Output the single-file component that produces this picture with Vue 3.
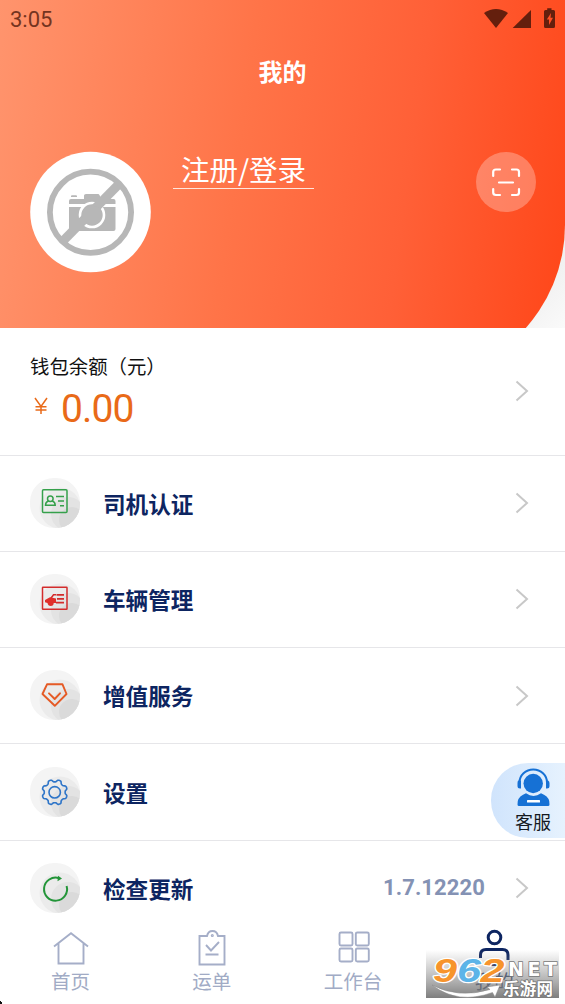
<script setup>
const rows = [
  { label: '司机认证', icon: 'license' },
  { label: '车辆管理', icon: 'vehicle' },
  { label: '增值服务', icon: 'service' },
  { label: '设置', icon: 'settings' },
  { label: '检查更新', icon: 'update', value: '1.7.12220' },
]
const gear = (() => {
  const pts = []
  for (let i = 0; i <= 96; i++) {
    const a = (i / 96) * Math.PI * 2
    const r = 11.6 + 1.2 * Math.tanh(2 * Math.cos(8 * a + Math.PI))
    pts.push(`${(24.7 + r * Math.cos(a)).toFixed(2)} ${(25.3 + r * Math.sin(a)).toFixed(2)}`)
  }
  return 'M' + pts.join('L') + 'Z'
})()
</script>

<template>
  <div class="screen">
    <header class="hero">
      <div class="hero-bg"></div>
      <div class="status">
        <span>3:05</span>
        <svg width="76" height="24" viewBox="0 0 76 24" fill="#641f0d">
          <path d="M1 13Q13 5 25 13L13 28Z" />
          <path d="M29.700 28L48 10V28Z" />
          <path fill-rule="evenodd" d="M64.200 8.300H68.500V10H70.500Q72 10 72 11.500V26.500Q72 28 70.500 28H62.500Q61 28 61 26.500V11.500Q61 10 62.500 10H64.200ZM68 13L63.800 19.500H66V25L70 17.800H67.500Z" />
        </svg>
      </div>
      <h1>我的</h1>
      <div class="profile">
        <svg class="avatar" width="122" height="122" viewBox="0 0 122 122">
          <circle cx="61.500" cy="61" r="60.300" fill="#fff" />
          <g fill="#b7b7b7">
            <path d="M42 45.200Q42 44.300 43 44.300H47Q48 44.300 48 45.200V46H42Z" />
            <path d="M40 50Q40 48 42 48H55V44.500Q55 43 57 43H69Q71 43 71.500 48H84.500Q86.500 48 86.500 50V53H40Z" />
            <path d="M40 56H86.500V78Q86.500 80 84.500 80H42Q40 80 40 78Z" />
          </g>
          <circle cx="63" cy="64" r="12" fill="#b7b7b7" stroke="#fff" stroke-width="2.600" />
          <path d="M33 91L91 32" stroke="#b7b7b7" stroke-width="9" />
          <circle cx="63" cy="64" r="9.500" fill="#b7b7b7" />
          <circle cx="61.500" cy="61.300" r="40.600" fill="none" stroke="#b7b7b7" stroke-width="5.800" />
        </svg>
        <a class="login">注册/登录</a>
        <div class="scan">
          <svg width="60" height="60" viewBox="0 0 60 60" fill="none" stroke="#fff" stroke-width="2.200" stroke-linecap="round" stroke-linejoin="round">
            <path d="M17.200 24V20Q17.200 17.500 20 17.500H24M36 17.500H40.500Q43 17.500 43 20V24M43 37V40.500Q43 43 40.500 43H36M24 43H20Q17.200 43 17.200 40.500V37M23 30.500H37" />
          </svg>
        </div>
      </div>
    </header>

    <section class="wallet">
      <div class="balance">
        <div class="caption">钱包余额（元）</div>
        <div class="amount">
          <svg class="yen" width="14" height="18" viewBox="0 0 14 18"><path d="M1 1L7 9.500L13 1M7 9V17M1.500 9.800H12.500M1.500 13H12.500" /></svg>
          <span>0.00</span>
        </div>
      </div>
      <svg class="chev" width="14" height="22" viewBox="0 0 14 22"><path d="M1.500 1.500L12 11L1.500 20.500" /></svg>
    </section>

    <main>
      <div v-for="r in rows" :key="r.icon" class="row">
        <svg class="badge" width="50" height="50" viewBox="0 0 50 50">
          <defs>
            <clipPath :id="'c-' + r.icon"><rect width="50" height="50" rx="24" /></clipPath>
          </defs>
          <g :clip-path="`url(#c-${r.icon})`">
            <rect width="50" height="50" fill="#f4f4f4" />
            <circle cx="30" cy="30" r="20.500" fill="#ebebeb" />
            <circle cx="38" cy="36" r="17" fill="#e3e3e3" />
            <circle cx="42" cy="42" r="13" fill="#dadada" />
          </g>
          <g v-if="r.icon === 'license'" fill="none" stroke="#35a04b" stroke-width="1.500">
            <rect x="12.500" y="11.800" width="24.500" height="22.800" rx="1" />
            <circle cx="20.300" cy="20.800" r="2.800" />
            <path d="M18.500 23C16.500 23.500 15.500 25 15.500 27.300H25.200C25.200 25 24.200 23.500 22.200 23M26 18.500H34M28 23H34M30 27.700H34" />
          </g>
          <g v-else-if="r.icon === 'vehicle'" fill="none" stroke="#d32c2c" stroke-width="1.500">
            <rect x="12.500" y="13.300" width="24.500" height="22" rx=".5" />
            <path d="M26.500 20.800H34M27 24.800H34M26 28.700H34" stroke-width="1.700" />
            <path d="M26 20.800H23.500L20.800 24.500" />
            <path d="M15 26L20 23.200L26 24.500V29H23.700Q23.700 32 20.700 32Q18 32 17.500 29L15 28.300Z" fill="#df2f2b" stroke="none" />
          </g>
          <g v-else-if="r.icon === 'service'" fill="none" stroke="#e55a25" stroke-width="1.900" stroke-linejoin="round" stroke-linecap="round">
            <path d="M17 14.300H32.500L36.500 24L24.800 35.800L12.500 24Z" />
            <path d="M19 23.300L24.700 29L30 23.300" />
          </g>
          <g v-else-if="r.icon === 'settings'" fill="none" stroke="#2e75c8" stroke-width="1.600">
            <path :d="gear" stroke-linejoin="round" />
            <circle cx="24.700" cy="25.300" r="5.700" />
          </g>
          <g v-else fill="none" stroke="#239539" stroke-width="2">
            <path d="M29 15.200A11.500 11.500 0 1 0 36.600 23" />
            <path d="M28 12.700L32 15.600L27.500 18.300Z" fill="#239539" stroke="none" />
          </g>
        </svg>
        <span class="label">{{ r.label }}</span>
        <span v-if="r.value" class="value">{{ r.value }}</span>
        <svg class="chev" width="14" height="22" viewBox="0 0 14 22"><path d="M1.500 1.500L12 11L1.500 20.500" /></svg>
      </div>
    </main>

    <aside class="support">
      <svg width="34" height="40" viewBox="0 0 34 40">
        <circle cx="17.200" cy="15.500" r="9.700" fill="#1671d5" />
        <path d="M3.500 14.500A13.700 13 0 0 1 31 14.500" fill="none" stroke="#1671d5" stroke-width="2" />
        <path d="M2.500 12.500H5V20.500H4Q1.500 20.500 1.500 18V15Q1.500 12.500 2.500 12.500ZM30 12.500H32Q33.500 13 33.500 15V18Q33.500 20.500 31 20.500H30Z" fill="#1671d5" />
        <path d="M1.500 36.500Q1 30 7 26.800L10 25.300Q17.500 30.500 25 25.300L28 26.800Q34 30 33.500 36.500Q33.500 38 32 38H3Q1.500 38 1.500 36.500Z" fill="#1671d5" />
        <rect x="11" y="32" width="13" height="2.600" rx=".5" fill="#fff" />
      </svg>
      <span>客服</span>
    </aside>

    <nav>
      <div class="tab">
        <svg width="40" height="40" viewBox="0 0 40 40"><path d="M3 19.500L20 6.200L37 19.500M7.500 16.500V36.500H32.500V16.500" /></svg>
        <span>首页</span>
      </div>
      <div class="tab">
        <svg width="40" height="40" viewBox="0 0 40 40"><path d="M15 9H7.500V37.500H32.500V9H26Q25 4 20.500 4Q16 4 15 9ZM14 18L19 23.500L27 15M13.500 27.500H26.500" /><circle cx="20.300" cy="8.500" r=".6" /></svg>
        <span>运单</span>
      </div>
      <div class="tab">
        <svg width="40" height="40" viewBox="0 0 40 40"><rect x="6.500" y="5.500" width="13" height="13" rx="1.500" /><rect x="22.800" y="5.500" width="13" height="13" rx="1.500" /><rect x="6.500" y="21.500" width="13" height="13" rx="1.500" /><rect x="22.800" y="21.500" width="13" height="13" rx="1.500" /></svg>
        <span>工作台</span>
      </div>
      <div class="tab active">
        <svg width="40" height="40" viewBox="0 0 40 40"><circle cx="20.500" cy="10.500" r="6.300" /><path d="M6.500 31V28Q6.500 22.500 12 22.500H28.500Q34 22.500 34 28V33M12 37.500H28" /></svg>
        <span>我的</span>
      </div>
    </nav>
    <svg class="speck" width="3" height="3" viewBox="0 0 3 3"><path d="M0 0H1V1H2V3H0Z" fill="#111" /></svg>

    <svg class="watermark" width="139" height="62" viewBox="0 0 139 62">
      <defs>
        <linearGradient id="shade" x1="0" y1="0" x2="0" y2="1">
          <stop offset="0" stop-color="#888" stop-opacity="0" />
          <stop offset=".45" stop-color="#888" stop-opacity=".45" />
          <stop offset="1" stop-color="#777" stop-opacity=".95" />
        </linearGradient>
      </defs>
      <rect y="8" width="133" height="48" fill="url(#shade)" />
      <path d="M6 43Q32 57 64 47.500L61 45L74 43L69 55L66.500 50.500Q32 63 6 43Z" fill="#fff" stroke="#888" stroke-width=".5" />
      <g class="digits" stroke="#fff" stroke-width="2.500" paint-order="stroke" stroke-linejoin="round">
        <text x="7" y="39.500" textLength="24" lengthAdjust="spacingAndGlyphs" fill="#f7942c">9</text>
        <text x="31" y="39.500" textLength="24" lengthAdjust="spacingAndGlyphs" fill="#5cb4e8">6</text>
        <text x="54.500" y="39.500" textLength="24" lengthAdjust="spacingAndGlyphs" fill="#f7942c">2</text>
      </g>
      <g fill="#fff" stroke="#777" stroke-width="1.500" paint-order="stroke">
        <text class="net" x="82" y="33.500" textLength="49" lengthAdjust="spacing">NET</text>
        <text class="site" x="77" y="53" textLength="50">乐游网</text>
      </g>
    </svg>
  </div>
</template>

<style>
body { background: #fff; }
</style>

<style scoped>
.screen {
  position: relative;
  width: 565px;
  height: 1004px;
  overflow: hidden;
  background: #fff;
  font-family: Roboto, "Noto Sans CJK SC", sans-serif;
}
.hero {
  position: relative;
  height: 328px;
  overflow: hidden;
  background: linear-gradient(135deg, #eee 90%, #fafafa);
}
.hero-bg {
  position: absolute;
  inset: 0 0 -52px 0;
  border-bottom-right-radius: 155px;
  background: linear-gradient(98deg, #ff946d 0%, #ff7448 42%, #ff6037 70%, #ff481b 97%);
}
.status {
  position: relative;
  display: flex;
  justify-content: space-between;
  height: 40px;
  padding: 0 6px 0 10px;
  box-sizing: border-box;
  font-size: 22px;
  line-height: 40px;
  color: #743420;
}
.status svg { overflow: visible; }
h1 {
  position: relative;
  margin: 0;
  height: 66px;
  font-size: 24px;
  line-height: 67px;
  text-align: center;
  color: #fff;
}
.profile {
  position: relative;
  display: flex;
  align-items: flex-start;
  padding: 45px 29px 0;
}
.login {
  width: 141px;
  height: 37px;
  margin-left: 22px;
  border-bottom: 1px solid #ffe5dc;
  font-family: "Noto Sans CJK SC", sans-serif;
  font-size: 28.500px;
  line-height: 36px;
  text-align: center;
  color: #fff;
}
.scan {
  width: 60px;
  height: 60px;
  margin: 1px 0 0 auto;
  border-radius: 50%;
  background: rgba(255, 255, 255, .28);
}
.wallet {
  display: flex;
  align-items: center;
  justify-content: space-between;
  box-sizing: border-box;
  height: 127.500px;
  padding: 0 36px 0 30px;
  border-bottom: 1px solid #e6e6e9;
}
.balance { padding-top: 8px; }
.caption { font-size: 19.400px; line-height: 28px; color: #111; }
.amount {
  display: flex;
  align-items: center;
  height: 55px;
  padding-left: 4px;
  font-size: 39px;
  letter-spacing: -.9px;
  color: #e96a18;
}
.yen { margin: -6px 13px 0 0; fill: none; stroke: #e96a18; stroke-width: 1.500; }
.chev { fill: none; stroke: #c8c8c8; stroke-width: 2; }
.row {
  display: flex;
  align-items: center;
  box-sizing: border-box;
  height: 96.300px;
  padding: 0 36px 0 30px;
  border-bottom: 1px solid #e6e6e9;
}
.badge { margin-top: -1px; }
.label {
  flex: 1;
  margin-left: 23px;
  font-size: 22.600px;
  font-weight: 700;
  color: #0d2561;
}
.value {
  margin: -2px 30px 0 0;
  font: 700 22px Roboto, sans-serif;
  letter-spacing: .1px;
  color: #8492b4;
}
.support {
  position: absolute;
  left: 491px;
  top: 763px;
  display: flex;
  flex-direction: column;
  align-items: center;
  box-sizing: border-box;
  width: 74px;
  height: 75px;
  padding: 5px 0 0 10px;
  border-radius: 37px 0 0 37px;
  background: linear-gradient(90deg, #d0e4fc, #e6f2fe);
  font-size: 18px;
  line-height: 29px;
  color: #15191f;
}
.support svg { flex: none; }
nav {
  position: absolute;
  left: 0;
  right: 0;
  bottom: 0;
  display: flex;
  height: 80px;
  background: #fff;
}
.tab {
  flex: 1;
  display: flex;
  flex-direction: column;
  align-items: center;
  padding-top: 3px;
  font-size: 19.500px;
  line-height: 32px;
  color: #a1abc5;
}
.tab svg { flex: none; fill: none; stroke: #a5aec8; stroke-width: 1.900; }
.active { color: #253765; }
.active svg { stroke: #0d2561; stroke-width: 3; }
.speck { position: absolute; left: 0; bottom: 0; }
.watermark { position: absolute; left: 426px; top: 942px; }
.digits { font: italic 700 34px "Liberation Sans", sans-serif; }
.net { font: 700 19px "DejaVu Sans", sans-serif; }
.site { font: 700 16.500px "Noto Sans CJK SC", sans-serif; }
</style>
